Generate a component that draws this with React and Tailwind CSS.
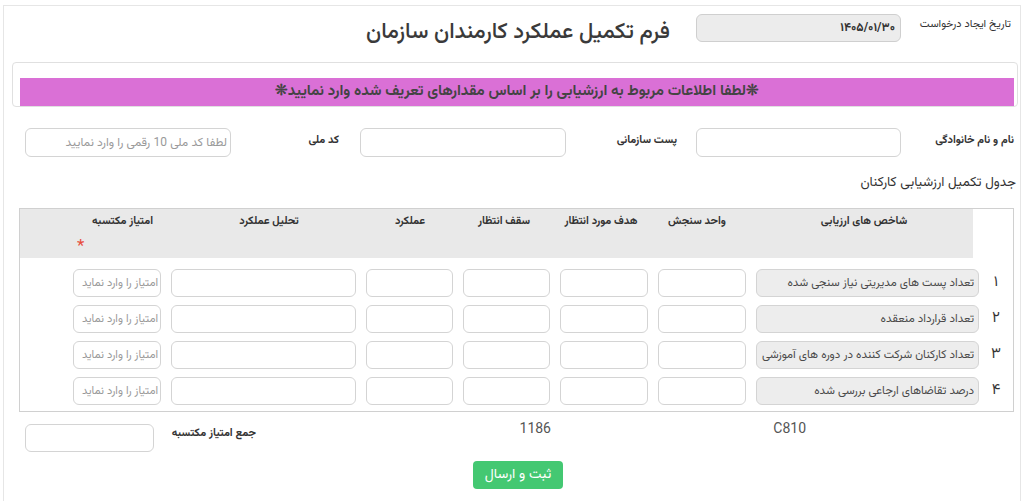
import React from 'react';

const indicators = [
  { n: '۱', text: 'تعداد پست های مدیریتی نیاز سنجی شده' },
  { n: '۲', text: 'تعداد قرارداد منعقده' },
  { n: '۳', text: 'تعداد کارکنان شرکت کننده در دوره های آموزشی' },
  { n: '۴', text: 'درصد تقاضاهای ارجاعی بررسی شده' },
];

// header cells sit over the gray band, widths tuned so labels line up with the inputs below
const headers = [
  { label: 'شاخص های ارزیابی', w: 'w-[218px]' },
  { label: 'واحد سنجش', w: 'w-[116px]' },
  { label: 'هدف مورد انتظار', w: 'w-[76px]' },
  { label: 'سقف انتظار', w: 'w-[118px]' },
  { label: 'عملکرد', w: 'w-[70px]' },
  { label: 'تحلیل عملکرد', w: 'w-[212px]' },
];

// base input look, size/padding/colour added per use so nothing clashes
const field = 'h-[28px] rounded-[6px] border border-[#d4d4d4] outline-none placeholder:text-[#9a9a9a]';
const plain = `${field} bg-white px-[5px] text-[12px] text-[#555]`;

function EvalRow({ n, text }) {
  return (
    <div className="flex h-[28px] items-center gap-[10px]">
      <div className="flex w-[24px] shrink-0 justify-center pr-[10px] text-[15px] text-[#333]">{n}</div>
      <input readOnly value={text} className={`${field} w-[223px] bg-[#ededed] px-[4px] text-[11.6px] text-[#4a4a4a]`} />
      <input className={`${plain} w-[88px]`} />
      <input className={`${plain} w-[88px]`} />
      <input className={`${plain} w-[87px]`} />
      <input className={`${plain} w-[87px]`} />
      <input className={`${plain} w-[185px]`} />
      <input placeholder="امتیاز را وارد نماید" className={`${field} w-[88px] bg-white px-[2px] text-[11.2px] text-[#555]`} />
    </div>
  );
}

export default function App() {
  return (
    <div className="min-h-screen bg-white pl-[3px] pt-[5px] font-['Vazirmatn',sans-serif]">
      <div dir="rtl" className="h-[520px] w-[1018px] border border-[#e6e6e6]">
        {/* Header: date + title */}
        <div className="mt-[8px] flex h-[28px] items-center pr-[9px]">
          <div className="w-[110px] pb-[5px] text-[11px] text-[#333]">تاریخ ایجاد درخواست</div>
          <div className="flex h-[28px] w-[205px] items-center rounded-[6px] border border-[#cfcfcf] bg-[#ececec] pr-[5px] text-[12px] font-bold text-[#333]">
            ۱۴۰۵/۰۱/۳۰
          </div>
          <h1 className="mr-[26px] pt-[10px] text-[22px] font-medium leading-[28px] text-[#3a3a3a]">
            فرم تکمیل عملکرد کارمندان سازمان
          </h1>
        </div>

        {/* Notice banner */}
        <div className="ml-[8px] mr-[2px] mt-[20px] rounded-[4px] border border-[#e0e0e0] pl-[7px] pr-[3px] pt-[15px]">
          <div className="flex h-[28px] items-center justify-center bg-[#da70d6] text-[15px] font-bold text-[#444]">
            ❊لطفا اطلاعات مربوط به ارزشیابی را بر اساس مقدارهای تعریف شده وارد نمایید❊
          </div>
        </div>

        {/* Personal info */}
        <div className="mt-[21px] flex items-start pr-[6px]">
          <label className="w-[113px] pt-[5px] text-[11px] font-bold text-[#333]">نام و نام خانوادگی</label>
          <input className={`${plain} h-[29px] w-[205px]`} />
          <label className="w-[130px] pr-[19px] pt-[5px] text-[11px] font-bold text-[#333]">پست سازمانی</label>
          <input className={`${plain} h-[29px] w-[206px]`} />
          <label className="w-[129px] pr-[21px] pt-[5px] text-[11px] font-bold text-[#333]">کد ملی</label>
          <input placeholder="لطفا کد ملی 10 رقمی را وارد نمایید" className={`${field} h-[29px] w-[206px] bg-white px-[3px] text-[12px] text-[#555]`} />
        </div>

        <h2 className="mt-[16px] pr-[4px] text-[13.5px] leading-[20px] text-[#333]">جدول تکمیل ارزشیابی کارکنان</h2>

        {/* Evaluation table */}
        <div className="ml-[15px] mr-[6px] mt-[15px] border border-[#d0d0d0] pb-[6px]">
          <div className="flex h-[49px]">
            <div className="w-[40px] shrink-0" />
            <div className="flex flex-1 bg-[#e9e9e9] text-[11px] font-bold text-[#333]">
              {headers.map((h) => (
                <div key={h.label} className={`${h.w} flex shrink-0 justify-center whitespace-nowrap pt-[5px] leading-[16px]`}>
                  {h.label}
                </div>
              ))}
              <div className="flex w-[100px] shrink-0 flex-col pt-[5px] leading-[16px]">
                <div className="whitespace-nowrap pr-[10px] text-right">امتیاز مکتسبه</div>
                <div className="mt-[9px] pl-[14px] text-left text-[17px] font-normal leading-[16px] text-[#e74c3c]">*</div>
              </div>
            </div>
          </div>
          <div className="mt-[11px] flex flex-col gap-[8px]">
            {indicators.map((r) => (
              <EvalRow key={r.n} {...r} />
            ))}
          </div>
        </div>

        {/* Total */}
        <div className="mt-[6px] flex items-start pr-[214px]">
          <div className="w-[32px] text-right font-[Roboto] text-[14px] leading-[20px] text-[#555]">C810</div>
          <div className="mr-[223px] w-[27px] text-right font-[Roboto] text-[14px] leading-[20px] text-[#555]">1186</div>
          <div className="mr-[268px] mt-[8px] w-[73px] whitespace-nowrap text-[11px] font-bold leading-[16px] text-[#333]">جمع امتیاز مکتسبه</div>
          <input className={`${plain} mr-[29px] mt-[6px] w-[129px]`} />
        </div>

        <div className="mt-[9px] flex pr-[457px]">
          <button className="h-[28px] w-[90px] rounded-[4px] bg-[#44c872] text-[14px] text-white">ثبت و ارسال</button>
        </div>
      </div>
    </div>
  );
}
